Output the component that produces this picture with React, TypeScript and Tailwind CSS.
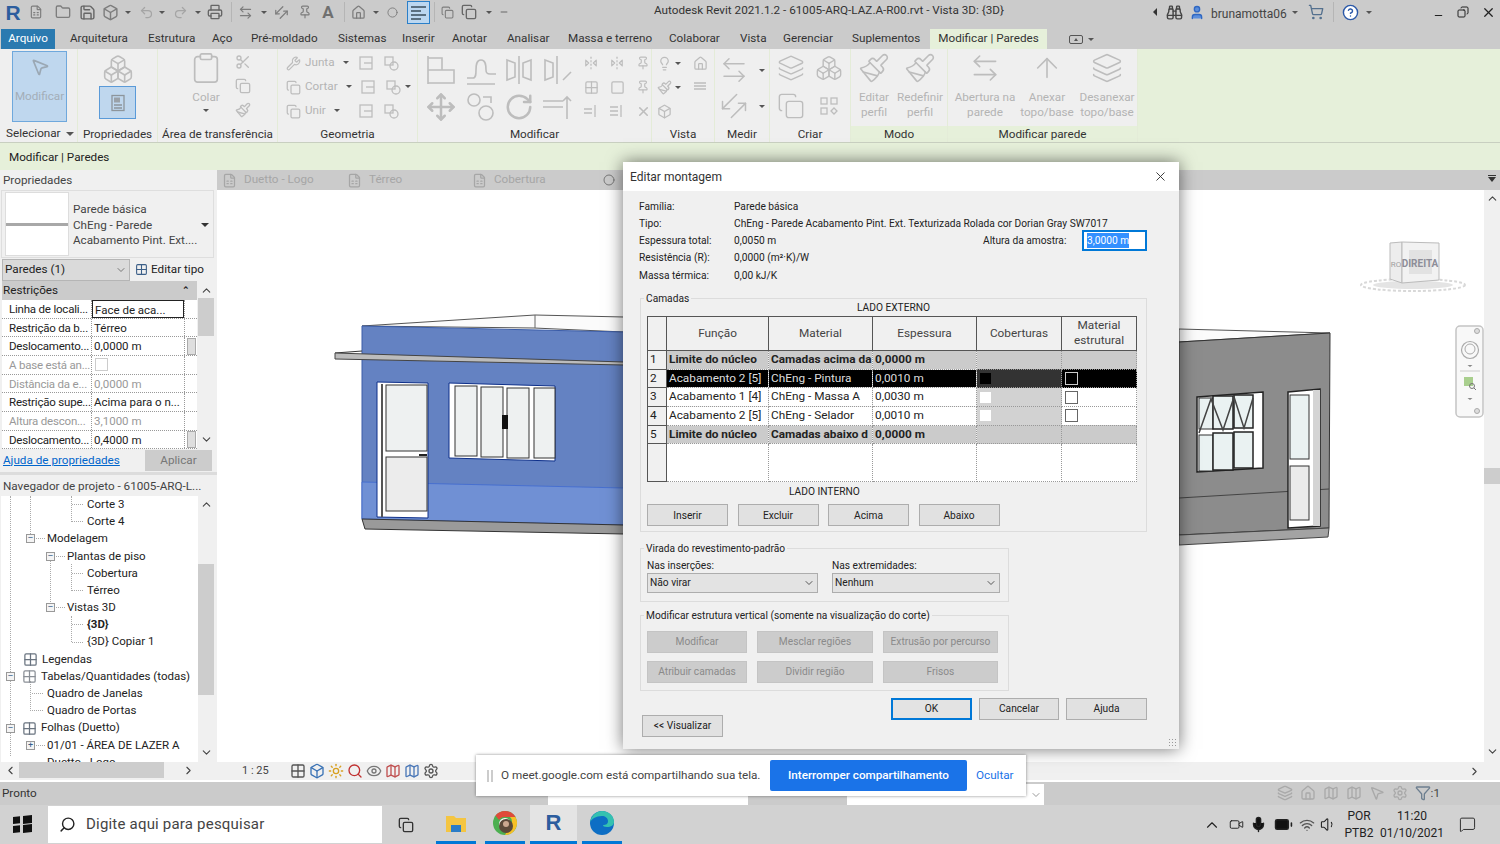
import {
  ArrowLeftRight, ArrowUp, Binoculars, ChevronDown, ChevronLeft, ChevronRight, ChevronUp, Circle, Copy, Eye,
  FileSpreadsheet, FlipHorizontal2, Folder, Grid2x2, HelpCircle, Home, Layers, Lightbulb, Mic, Minus, MousePointer2, Move,
  Paintbrush, Pin, Printer, Redo2, RotateCw, Save, Scissors, Search, ShoppingCart, Square, Sun, Undo2, User, Video,
  Volume1, Wifi, X, Box, Boxes, Clipboard, Wrench, Funnel, Settings, MessageSquare, Map, BatteryFull,
} from "lucide-react";
import type { ReactNode } from "react";

const GRAY = "#bdbdbd";

function Arrow({ className = "" }: { className?: string }) {
  return <span className={`inline-block w-0 h-0 border-x-[3px] border-x-transparent border-t-[3px] border-t-[#555] ${className}`} />;
}

function Cell({ w, children }: { w: string; children?: ReactNode }) {
  return <div className={`${w} h-[24px] flex items-center justify-center shrink-0`}>{children}</div>;
}

function TitleBar() {
  const c = "#7d7d7d";
  return (
    <div className="h-[29px] flex items-start shrink-0 pl-[2px]">
      <Cell w="w-[22px]"><span className="text-[21px] font-bold text-[#2c5d9e] leading-none font-['Liberation_Sans',sans-serif]">R</span></Cell>
      <Cell w="w-[24px]"><FileSpreadsheet size={14} color={c} /></Cell>
      <Cell w="w-[30px]"><Folder size={16} color={c} /></Cell>
      <Cell w="w-[18px]"><Save size={17} color="#666" /></Cell>
      <Cell w="w-[28px]"><Box size={17} color={c} /></Cell>
      <Cell w="w-[8px]"><Arrow /></Cell>
      <Cell w="w-[28px]"><Undo2 size={15} color="#a5a5a5" /></Cell>
      <Cell w="w-[4px]"><Arrow /></Cell>
      <Cell w="w-[32px]"><Redo2 size={15} color="#a5a5a5" /></Cell>
      <Cell w="w-[4px]"><Arrow /></Cell>
      <Cell w="w-[30px]"><Printer size={16} color="#666" /></Cell>
      <Cell w="w-[2px]"><div className="w-px h-[20px] bg-[#b5b5b5]" /></Cell>
      <Cell w="w-[26px]"><ArrowLeftRight size={15} color={c} /></Cell>
      <Cell w="w-[12px]"><Arrow /></Cell>
      <Cell w="w-[22px]"><ArrowLeftRight size={15} color={c} className="-rotate-45" /></Cell>
      <Cell w="w-[26px]"><Pin size={14} color={c} /></Cell>
      <Cell w="w-[20px]"><span className="text-[17px] font-bold text-[#707070] leading-none">A</span></Cell>
      <Cell w="w-[12px]"><div className="w-px h-[20px] bg-[#b5b5b5]" /></Cell>
      <Cell w="w-[16px]"><Home size={15} color={c} /></Cell>
      <Cell w="w-[20px]"><Arrow /></Cell>
      <Cell w="w-[12px]"><Circle size={11} color={c} /></Cell>
      <Cell w="w-[9px]" />
      <div className="w-[23px] h-[23px] mt-px bg-[#bcd7f0] border border-[#2a7fc9] flex flex-col justify-center gap-[2px] px-[3px] shrink-0">
        <div className="h-[2px] bg-[#5a6f80]" /><div className="h-[2px] w-[10px] bg-[#5a6f80]" /><div className="h-[2px] bg-[#5a6f80]" /><div className="h-[2px] w-[10px] bg-[#5a6f80]" />
      </div>
      <Cell w="w-[8px]"><div className="w-px h-[20px] bg-[#b5b5b5]" /></Cell>
      <Cell w="w-[18px]"><Copy size={13} color={c} /></Cell>
      <Cell w="w-[26px]"><Copy size={16} color="#666" /></Cell>
      <Cell w="w-[14px]"><Arrow /></Cell>
      <Cell w="w-[16px]"><Minus size={10} color="#555" /></Cell>
      <div className="w-[142px] shrink-0" />
      <div className="text-[11.7px] text-[#333] mt-[2px] whitespace-nowrap w-[352px] shrink-0">Autodesk Revit 2021.1.2 - 61005-ARQ-LAZ.A-R00.rvt - Vista 3D: {"{3D}"}</div>
      <div className="w-[145px] shrink-0" />
      <Cell w="w-[8px]"><span className="w-0 h-0 border-y-[4px] border-y-transparent border-r-[4px] border-r-[#333]" /></Cell>
      <Cell w="w-[30px]"><Binoculars size={17} color="#444" /></Cell>
      <Cell w="w-[16px]"><User size={17} color="#2f67c2" fill="#5b8edc" /></Cell>
      <div className="ml-[6px] w-[78px] text-[12px] text-[#444] mt-[5px] shrink-0">brunamotta06</div>
      <Cell w="w-[12px]"><Arrow /></Cell>
      <Cell w="w-[30px]"><ShoppingCart size={16} color="#54708e" /></Cell>
      <Cell w="w-[4px]"><div className="w-px h-[20px] bg-[#b5b5b5]" /></Cell>
      <Cell w="w-[30px]"><HelpCircle size={17} color="#2a58a8" fill="#fff" /></Cell>
      <Cell w="w-[8px]"><Arrow /></Cell>
      <div className="w-[53px] shrink-0" />
      <Cell w="w-[24px]"><Minus size={11} color="#222" strokeWidth={2.5} className="mt-[6px]" /></Cell>
      <Cell w="w-[26px]"><Copy size={12} color="#222" className="scale-x-[-1]" /></Cell>
      <Cell w="w-[24px]"><X size={15} color="#222" /></Cell>
    </div>
  );
}

const tabs: [string, string][] = [
  ["Arquitetura", "w-[78px]"], ["Estrutura", "w-[64px]"], ["Aço", "w-[39px]"], ["Pré-moldado", "w-[87px]"], ["Sistemas", "w-[64px]"],
  ["Inserir", "w-[50px]"], ["Anotar", "w-[55px]"], ["Analisar", "w-[61px]"], ["Massa e terreno", "w-[101px]"], ["Colaborar", "w-[71px]"],
  ["Vista", "w-[43px]"], ["Gerenciar", "w-[69px]"], ["Suplementos", "w-[78px]"],
];

function TabRow() {
  return (
    <div className="h-[20px] flex items-center shrink-0 pl-px text-[11.7px] text-[#333]">
      <div className="w-[54px] h-full bg-[#2a7ab0] text-white flex items-center justify-center">Arquivo</div>
      <div className="w-[15px]" />
      {tabs.map(([t, w]) => <div key={t} className={`${w} whitespace-nowrap`}>{t}</div>)}
      <div className="w-[117px] h-full bg-[#e6f0da] flex items-center justify-center">Modificar | Paredes</div>
      <div className="ml-[22px] w-[14px] h-[9px] rounded-[2px] border border-[#555] flex items-center justify-center"><span className="w-0 h-0 border-x-[2px] border-x-transparent border-b-[3px] border-b-[#555]" /></div>
      <Arrow className="ml-[5px]" />
    </div>
  );
}

function RC({ w = "w-[25px]", children }: { w?: string; children?: ReactNode }) {
  return <div className={`${w} h-[24px] flex items-center justify-center shrink-0`}>{children}</div>;
}

function RLabel({ children, className = "" }: { children: ReactNode; className?: string }) {
  return <span className={`text-[11.7px] text-[#b4b4b4] ${className}`}>{children}</span>;
}

function RGroup({ w, title, green, children }: { w: string; title: string; green?: boolean; children: ReactNode }) {
  return (
    <div className={`${w} h-full flex flex-col border-r border-[#e4ecd8] shrink-0 ${green ? "bg-[#e6f0da]" : "bg-[#efefef]"}`}>
      <div className="h-[77px] bg-[#efefef] relative">{children}</div>
      <div className="h-[16px] text-[11.7px] leading-[16px] text-center text-[#333] whitespace-nowrap">{title}</div>
    </div>
  );
}

function BigIcon({ children }: { children: ReactNode }) {
  return <svg width="32" height="32" viewBox="0 0 32 32" fill="none" stroke={GRAY} strokeWidth="1.6">{children}</svg>;
}

function Small({ children }: { children: ReactNode }) {
  return <svg width="18" height="18" viewBox="0 0 18 18" fill="none" stroke={GRAY} strokeWidth="1.3">{children}</svg>;
}

function Ribbon() {
  return (
    <div className="h-[94px] shrink-0 bg-[#e6f0da] border-b border-[#c8cfc0] flex">
      <div className="h-[93px] flex">
        <RGroup w="w-[78px]" title="">
          <div className="mx-[12px] mt-[2px] w-[55px] h-[71px] bg-[#bfd7ee] border border-[#6fa8dc] flex flex-col items-center pt-[5px]">
            <MousePointer2 size={20} color="#9ba8b4" />
            <span className="text-[11.7px] text-[#a3aeb8] mt-[11px]">Modificar</span>
          </div>
          <div className="absolute left-[6px] top-[77px] h-[16px] flex items-center gap-[5px] text-[11.7px] text-[#333]">Selecionar <Arrow className="border-x-[4px] border-t-[4px]" /></div>
        </RGroup>
        <RGroup w="w-[80px]" title="Propriedades">
          <div className="flex flex-col items-center pt-[4px]">
            <Boxes size={32} color={GRAY} strokeWidth={1.2} />
            <div className="mt-[1px] w-[37px] h-[33px] bg-[#bfd7ee] border border-[#5a9ad8] flex items-center justify-center">
              <Small><rect x="3" y="1.5" width="12" height="15" stroke="#8d959c" /><rect x="5" y="3.5" width="6" height="5" fill="#9aa1a8" stroke="none" /><path d="M5 11h8M5 14h8" stroke="#8d959c" /></Small>
            </div>
          </div>
        </RGroup>
        <RGroup w="w-[120px]" title="Área de transferência">
          <div className="flex pt-[1px]">
            <div className="w-[72px] pl-[24px] flex flex-col items-center">
              <Clipboard size={34} color={GRAY} strokeWidth={1.2} className="mt-[1px]" />
              <RLabel className="mt-[4px]">Colar</RLabel>
              <Arrow className="mt-[2px]" />
            </div>
            <div className="flex flex-col w-[24px]">
              <RC><Scissors size={16} color={GRAY} /></RC>
              <RC><Copy size={16} color={GRAY} /></RC>
              <RC><Paintbrush size={16} color={GRAY} /></RC>
            </div>
          </div>
        </RGroup>
        <RGroup w="w-[140px]" title="Geometria">
          <div className="flex flex-col pl-[3px] pt-[2px]">
            {[["Junta", "w-[46px]", Wrench, "w-[2px]"], ["Cortar", "w-[50px]", Copy, "w-[0px]"], ["Unir", "w-[46px]", Copy, "w-[2px]"]].map(([t, w, Ic, sp]: any) => (
              <div key={t} className="flex items-center">
                <RC w="w-[24px]"><Ic size={15} color={GRAY} /></RC>
                <div className={`${w} flex items-center gap-[8px]`}><RLabel>{t}</RLabel><Arrow /></div>
                <div className={sp} />
                <RC><Small><rect x="3" y="3" width="12" height="12" /><path d="M7 9h8" /></Small></RC>
                <RC><Small><rect x="3" y="3" width="8" height="8" /><circle cx="12" cy="12" r="4" /></Small></RC>
              </div>
            ))}
            <Arrow className="absolute left-[127px] top-[36px]" />
          </div>
        </RGroup>
        <RGroup w="w-[234px]" title="Modificar">
          <div className="flex pl-[3px]">
            <div className="grid grid-cols-[40px_39px_38px_38px] h-[77px] items-center justify-items-center w-[155px] pt-[2px]">
              <BigIcon><path d="M3 2v28M3 4h14v12H3M3 16h26v13H3" /></BigIcon>
              <BigIcon><path d="M2 24h6c3 0 3-4 3-8s0-10 5-10 5 6 5 10 2 4 4 4h6M2 30h28" /></BigIcon>
              <BigIcon><path d="M16 2v28M4 6l8 3v14l-8 3zM28 6l-8 3v14l8 3z" /></BigIcon>
              <BigIcon><path d="M4 6l8 3v14l-8 3zM16 2v28" /><path d="M22 26l8-8" /></BigIcon>
              <Move size={30} color={GRAY} />
              <BigIcon><circle cx="9" cy="9" r="6" /><circle cx="21" cy="22" r="7" /><path d="M18 6h8v6" /></BigIcon>
              <RotateCw size={30} color={GRAY} />
              <BigIcon><path d="M2 10h20M2 16h20M26 28V6M22 10l4-4 4 4" /></BigIcon>
            </div>
            <div className="grid grid-cols-[26px_26px_26px] grid-rows-[24px_24px_24px] items-center justify-items-center pl-[2px] pt-[2px]">
              <FlipHorizontal2 size={14} color={GRAY} /><FlipHorizontal2 size={14} color={GRAY} /><Pin size={14} color={GRAY} />
              <Grid2x2 size={15} color={GRAY} /><Square size={15} color={GRAY} /><Pin size={14} color={GRAY} />
              <Small><path d="M2 7h8M2 11h8M13 3v12" /></Small><Small><path d="M2 5h8M2 9h8M2 13h8M13 3v12" /></Small><X size={15} color={GRAY} strokeWidth={2.5} />
            </div>
          </div>
        </RGroup>
        <RGroup w="w-[63px]" title="Vista">
          <div className="flex flex-col pl-[2px] pt-[2px]">
            <div className="flex items-center"><RC w="w-[21px]"><Lightbulb size={15} color={GRAY} /></RC><Arrow className="mr-[7px]" /><RC w="w-[24px]"><Home size={15} color={GRAY} /></RC></div>
            <div className="flex items-center"><RC w="w-[21px]"><Paintbrush size={15} color={GRAY} /></RC><Arrow className="mr-[7px]" /><RC w="w-[24px]"><Small><path d="M3 5h12M3 8h12M3 11h12" /></Small></RC></div>
            <RC w="w-[21px]"><Box size={15} color={GRAY} /></RC>
          </div>
        </RGroup>
        <RGroup w="w-[55px]" title="Medir">
          <div className="flex flex-col pt-[3px] pl-[4px]">
            <div className="h-[36px] flex items-center"><ArrowLeftRight size={30} color={GRAY} strokeWidth={1.2} /><Arrow className="ml-[10px]" /></div>
            <div className="h-[36px] flex items-center"><ArrowLeftRight size={30} color={GRAY} strokeWidth={1.2} className="-rotate-45" /><Arrow className="ml-[10px]" /></div>
          </div>
        </RGroup>
        <RGroup w="w-[81px]" title="Criar">
          <div className="grid grid-cols-[38px_38px] grid-rows-[38px_38px] items-center justify-items-center pl-[2px]">
            <Layers size={28} color={GRAY} strokeWidth={1.2} />
            <Boxes size={28} color={GRAY} strokeWidth={1.2} />
            <Copy size={28} color={GRAY} strokeWidth={1.2} />
            <Small><rect x="1" y="1" width="6" height="6" /><rect x="11" y="1" width="6" height="6" /><rect x="1" y="11" width="6" height="6" /><path d="M11 14l3-3 3 3-3 3z" /></Small>
          </div>
        </RGroup>
        <RGroup w="w-[97px]" title="Modo" green>
          <div className="flex">
            {["Editar|perfil", "Redefinir|perfil"].map((t) => (
              <div key={t} className="w-[46px] flex flex-col items-center pt-[3px]">
                <Paintbrush size={32} color={GRAY} strokeWidth={1.2} />
                <RLabel className="leading-[15px] text-center mt-[6px] whitespace-nowrap">{t.split("|")[0]}<br />{t.split("|")[1]}</RLabel>
              </div>
            ))}
          </div>
        </RGroup>
        <RGroup w="w-[190px]" title="Modificar parede" green>
          <div className="flex pl-[6px]">
            {[["Abertura na|parede", "w-[62px]", ArrowLeftRight], ["Anexar|topo/base", "w-[62px]", ArrowUp], ["Desanexar|topo/base", "w-[58px]", Layers]].map(([t, w, Ic]: any) => (
              <div key={t} className={`${w} flex flex-col items-center pt-[3px]`}>
                <Ic size={32} color={GRAY} strokeWidth={1.2} />
                <RLabel className="leading-[15px] text-center mt-[6px] whitespace-nowrap">{t.split("|")[0]}<br />{t.split("|")[1]}</RLabel>
              </div>
            ))}
          </div>
        </RGroup>
      </div>
    </div>
  );
}

const props: [string, string, boolean][] = [
  ["Linha de locali...", "Face de aca...", true],
  ["Restrição da b...", "Térreo", true],
  ["Deslocamento...", "0,0000 m", true],
  ["A base está an...", "", false],
  ["Distância da e...", "0,0000 m", false],
  ["Restrição supe...", "Acima para o n...", true],
  ["Altura descon...", "3,1000 m", false],
  ["Deslocamento...", "0,4000 m", true],
];

function Properties() {
  return (
    <div className="h-[305px] flex flex-col border-b-[3px] border-[#dcdcdc]">
      <div className="h-[20px] leading-[20px] pl-[3px] text-[11.7px] text-[#444]">Propriedades</div>
      <div className="mx-[1px] mr-[3px] h-[68px] border border-[#dedede] flex items-center relative">
        <div className="w-[64px] h-[64px] ml-[3px] bg-white border border-[#ddd] flex items-center"><div className="w-full h-[3px] bg-[#a8a8a8]" /></div>
        <div className="ml-[4px] mt-[3px] leading-[15.6px] text-[11.7px] text-[#444] whitespace-nowrap">Parede básica<br />ChEng - Parede<br />Acabamento Pint. Ext....</div>
        <span className="absolute left-[199px] top-[32px] w-0 h-0 border-x-[4px] border-x-transparent border-t-[4px] border-t-[#333]" />
      </div>
      <div className="h-[23px] flex items-center pl-[2px]">
        <div className="w-[128px] h-[22px] bg-[#dadada] border border-[#b5b5b5] flex items-center justify-between px-[2px] text-[11.7px]">Paredes (1)<ChevronDown size={12} color="#777" /></div>
        <Grid2x2 size={13} color="#3c5f88" className="ml-[5px]" />
        <span className="ml-[3px] text-[11.7px] whitespace-nowrap">Editar tipo</span>
      </div>
      <div className="flex h-[168px]">
        <div className="w-[195px] ml-[2px]">
          <div className="h-[19px] bg-[#cbcbcb] text-[11.7px] flex items-center justify-between pl-px pr-[7px]">Restrições<span className="text-[9px] font-bold leading-none">⌃</span></div>
          {props.map(([l, v, on], i) => (
            <div key={i} className="h-[18.67px] flex bg-white border-b border-dotted border-[#999] text-[11.5px]">
              <div className={`w-[90px] pl-[7px] border-r border-dotted border-[#999] whitespace-nowrap tracking-[-0.2px] leading-[18px] ${on ? "text-[#222]" : "text-[#999]"}`}>{l}</div>
              <div className={`w-[92px] pl-[2px] whitespace-nowrap leading-[18px] ${i === 0 ? "border border-[#222] text-[#222]" : on ? "text-[#222]" : "text-[#999]"}`}>
                {i === 3 ? <div className="w-[13px] h-[13px] border border-[#ccc] mt-[2px] ml-px" /> : v}
              </div>
              <div className="flex-1 border-l border-dotted border-[#999] flex items-center justify-center">
                {(i === 2 || i === 7) && <div className="w-[9px] h-[17px] bg-[#dedede] border border-[#aaa]" />}
              </div>
            </div>
          ))}
        </div>
        <div className="w-[16px] ml-[1px] relative flex flex-col items-center justify-between text-[#444] bg-[#f0f0f0]">
          <ChevronUp size={13} strokeWidth={2} className="mt-[3px]" />
          <div className="absolute top-[17px] left-0 w-[16px] h-[38px] bg-[#cdcdcd]" />
          <ChevronDown size={13} strokeWidth={2} className="mb-[3px]" />
        </div>
      </div>
      <div className="flex items-center justify-between pl-[3px] pr-[5px] pt-[1px]">
        <span className="text-[11.7px] text-[#0066cc] underline">Ajuda de propriedades</span>
        <div className="w-[67px] h-[21px] bg-[#cccccc] text-[11.7px] text-[#777] flex items-center justify-center">Aplicar</div>
      </div>
    </div>
  );
}

const tree: { t: string; ml: string; box?: string; ic?: ReactNode; bold?: boolean }[] = [
  { t: "Corte 3", ml: "ml-[71px]" },
  { t: "Corte 4", ml: "ml-[71px]" },
  { t: "Modelagem", ml: "ml-[25px]", box: "-" },
  { t: "Plantas de piso", ml: "ml-[45px]", box: "-" },
  { t: "Cobertura", ml: "ml-[71px]" },
  { t: "Térreo", ml: "ml-[71px]" },
  { t: "Vistas 3D", ml: "ml-[45px]", box: "-" },
  { t: "{3D}", ml: "ml-[71px]", bold: true },
  { t: "{3D} Copiar 1", ml: "ml-[71px]" },
  { t: "Legendas", ml: "ml-[22px]", ic: <Grid2x2 size={15} color="#6a7480" /> },
  { t: "Tabelas/Quantidades (todas)", ml: "ml-[5px]", box: "-", ic: <Grid2x2 size={15} color="#8a8f96" /> },
  { t: "Quadro de Janelas", ml: "ml-[31px]" },
  { t: "Quadro de Portas", ml: "ml-[31px]" },
  { t: "Folhas (Duetto)", ml: "ml-[5px]", box: "-", ic: <Grid2x2 size={15} color="#6a7480" /> },
  { t: "01/01 - ÁREA DE LAZER A", ml: "ml-[25px]", box: "+" },
  { t: "Duetto - Logo", ml: "ml-[31px]" },
];

function Browser() {
  return (
    <div className="flex-1 flex flex-col">
      <div className="h-[21px] leading-[22px] pl-[3px] text-[11.7px] text-[#444] whitespace-nowrap">Navegador de projeto - 61005-ARQ-L...</div>
      <div className="flex h-[266px]">
        <div className="w-[197px] ml-[1px] bg-white overflow-hidden text-[11.5px] text-[#222] relative">
          <div className="absolute left-[70px] top-0 h-[26px] border-l border-dotted border-[#aaa]" />
          <div className="absolute left-[29px] top-0 h-[38px] border-l border-dotted border-[#aaa]" />
          <div className="absolute left-[49px] top-[60px] h-[52px] border-l border-dotted border-[#aaa]" />
          <div className="absolute left-[70px] top-[68px] h-[27px] border-l border-dotted border-[#aaa]" />
          <div className="absolute left-[70px] top-[120px] h-[26px] border-l border-dotted border-[#aaa]" />
          <div className="absolute left-[9px] top-0 h-[260px] border-l border-dotted border-[#aaa]" />
          <div className="absolute left-[29px] top-[185px] h-[30px] border-l border-dotted border-[#aaa]" />
          {tree.map((r) => (
            <div key={r.t} className={`h-[17.2px] flex items-center ${r.ml} whitespace-nowrap relative`}>
              {r.box && <span className="w-[9px] h-[9px] mr-[1px] border border-[#999] bg-[#f4f4f4] flex items-center justify-center text-[9px] leading-none text-[#3a5f8a] shrink-0">{r.box === "-" ? "–" : "+"}</span>}
              {r.box && !r.ic && <span className="w-[9px] border-t border-dotted border-[#aaa] mr-[2px]" />}
              {!r.box && !r.ic && <span className="w-[11px] border-t border-dotted border-[#aaa] mr-[4px]" />}
              {r.ic && <span className={`${r.box ? "ml-[6px]" : ""} mr-[4px] flex`}>{r.ic}</span>}
              <span className={r.bold ? "font-bold" : ""}>{r.t}</span>
            </div>
          ))}
        </div>
        <div className="w-[16px] relative flex flex-col items-center justify-between text-[#444]">
          <ChevronUp size={13} className="mt-[2px]" />
          <div className="absolute top-[68px] left-0 w-[16px] h-[131px] bg-[#cdcdcd]" />
          <ChevronDown size={13} className="mb-[3px]" />
        </div>
      </div>
      <div className="h-[16px] flex items-center mx-[1px] text-[#444]">
        <ChevronLeft size={13} className="ml-[3px]" />
        <div className="ml-[2px] w-[145px] h-[16px] bg-[#cdcdcd]" />
        <ChevronRight size={13} className="ml-[18px]" />
      </div>
    </div>
  );
}

function Wall3D() {
  return (
    <svg width="1267" height="572" viewBox="216 190 1267 572" className="block">
      {/* left wing */}
      <polygon points="361,326 534,315 623,317 623,332 533,328" fill="#fbfbfb" stroke="#555" />
      <line x1="534" y1="315" x2="534" y2="328" stroke="#666" />
      <polygon points="361,326 623,332 623,525 361,519" fill="#6482c2" stroke="#3a5ca8" />
      <polygon points="361,482 623,488 623,525 361,519" fill="#7090d4" stroke="#3f6ad0" strokeWidth="0.8" />
      <polyline points="334,353 361,351" stroke="#333" fill="none" />
      <polygon points="334,353 623,362 623,365 334,359" fill="#bcbcbc" stroke="#444" />
      <polygon points="361,519 623,525 623,534 364,529" fill="#9a9a9a" stroke="#333" />
      <polygon points="376,382 427,383 427,518 376,517" fill="#fff" stroke="#0d2f8a" />
      <rect x="380" y="384" width="2" height="133" fill="#555" />
      <rect x="385" y="385" width="41" height="66" fill="#eef1f1" stroke="#333" />
      <rect x="385" y="457" width="41" height="54" fill="#ececec" stroke="#333" />
      <rect x="418" y="454" width="8" height="2" fill="#222" />
      <polygon points="448,383 554,386 554,461 448,458" fill="#fff" stroke="#0d2f8a" />
      <rect x="454" y="386" width="22" height="70" fill="#eef1f1" stroke="#333" />
      <rect x="480" y="387" width="22" height="70" fill="#eef1f1" stroke="#333" />
      <rect x="506" y="388" width="22" height="70" fill="#eef1f1" stroke="#333" />
      <rect x="533" y="388" width="21" height="70" fill="#eef1f1" stroke="#333" />
      <rect x="501" y="415" width="6" height="14" fill="#111" />
      {/* right wing */}
      <polygon points="1178,329 1329,333 1178,342" fill="#fbfbfb" stroke="#555" />
      <polygon points="1178,342 1329,333 1328,528 1178,535" fill="#8c8c8c" stroke="#333" />
      <polyline points="1178,498 1328,489" stroke="#444" fill="none" />
      <polygon points="1178,535 1328,528 1327,537 1178,545" fill="#a3a3a3" stroke="#444" />
      <polygon points="1196,397 1262,392 1262,468 1196,472" fill="#fff" stroke="#222" strokeWidth="1.5" />
      <rect x="1198" y="398" width="14" height="31" fill="#eaf2f2" stroke="#333" />
      <rect x="1212" y="396" width="20" height="33" fill="#eaf2f2" stroke="#222" strokeWidth="1.5" />
      <rect x="1233" y="395" width="19" height="33" fill="#eaf2f2" stroke="#222" strokeWidth="1.5" />
      <rect x="1198" y="435" width="14" height="36" fill="#eaf2f2" stroke="#333" />
      <rect x="1212" y="433" width="20" height="37" fill="#eaf2f2" stroke="#222" strokeWidth="1.5" />
      <rect x="1233" y="432" width="19" height="36" fill="#eaf2f2" stroke="#222" strokeWidth="1.5" />
      <polyline points="1198,433 1210,399 1222,430 1233,397 1243,428 1252,398" fill="none" stroke="#444" strokeWidth="1.5" />
      <polygon points="1287,392 1319,389 1319,526 1287,528" fill="#fff" stroke="#222" strokeWidth="1.5" />
      <rect x="1289" y="395" width="19" height="64" fill="#eaf2f2" stroke="#333" />
      <rect x="1289" y="466" width="19" height="54" fill="#ebebeb" stroke="#333" />
      <rect x="1312" y="390" width="7" height="136" fill="#d4d4d4" />
      {/* view cube */}
      <ellipse cx="1412" cy="285" rx="52" ry="6" fill="none" stroke="#d8d8d8" strokeWidth="2" strokeDasharray="3 2" />
      <ellipse cx="1412" cy="285" rx="40" ry="4" fill="#e4e4e4" />
      <polygon points="1389,243 1401,242 1401,283 1389,279" fill="#ededed" stroke="#bbb" />
      <polygon points="1401,242 1438,243 1438,280 1401,283" fill="#f2f2f2" stroke="#bbb" />
      <rect x="1408" y="250" width="23" height="24" fill="#e2e2e2" />
      <text x="1419" y="267" textAnchor="middle" fontSize="10" fontWeight="700" fill="#8d8d98" fontFamily="Roboto, sans-serif">DIREITA</text>
      <text x="1395" y="267" textAnchor="middle" fontSize="8" fill="#a0a0a0" fontFamily="Roboto, sans-serif">RO</text>
      {/* nav bar */}
      <rect x="1455" y="326" width="27" height="91" rx="4" fill="#f8f8f8" stroke="#c4c4c4" strokeWidth="1.5" />
      <circle cx="1476" cy="331" r="2.5" fill="#ddd" stroke="#aaa" />
      <circle cx="1476" cy="411" r="2.5" fill="#ddd" stroke="#aaa" />
      <circle cx="1469" cy="350" r="8.5" fill="none" stroke="#aaa" strokeWidth="1.2" />
      <circle cx="1469" cy="349" r="5" fill="none" stroke="#aaa" />
      <path d="M1466.5 365l2.5 2 2.5-2z" fill="#888" />
      <line x1="1459" y1="371" x2="1479" y2="371" stroke="#ccc" />
      <rect x="1463" y="377" width="9" height="9" fill="#a9cf8e" />
      <circle cx="1471" cy="386" r="2.5" fill="none" stroke="#777" />
      <line x1="1473" y1="388" x2="1475" y2="390" stroke="#777" />
      <path d="M1466.5 398l2.5 2 2.5-2z" fill="#888" />
    </svg>
  );
}

function Viewport() {
  const tabGray = "text-[11.7px] text-[#a6a6a6]";
  return (
    <div className="flex-1 flex flex-col min-w-0">
      <div className="h-[20px] bg-[#cbcbcb] flex items-center pl-[5px] relative shrink-0">
        <FileSpreadsheet size={15} color="#a6a6a6" /><span className={`${tabGray} ml-[7px] w-[103px]`}>Duetto - Logo</span>
        <FileSpreadsheet size={15} color="#a6a6a6" /><span className={`${tabGray} ml-[7px] w-[103px]`}>Térreo</span>
        <FileSpreadsheet size={15} color="#a6a6a6" /><span className={`${tabGray} ml-[7px] w-[109px]`}>Cobertura</span>
        <Circle size={12} color="#777" />
        <div className="absolute right-[4px] top-[5px] flex flex-col gap-px items-center"><div className="w-[8px] h-px bg-[#333]" /><span className="w-0 h-0 border-x-[4px] border-x-transparent border-t-[5px] border-t-[#333]" /></div>
      </div>
      <div className="h-[572px] flex bg-white shrink-0">
        <Wall3D />
        <div className="w-[16px] bg-[#f0f0f0] relative flex flex-col items-center justify-between text-[#444]">
          <ChevronUp size={13} strokeWidth={2} className="mt-[2px]" />
          <div className="absolute top-[278px] left-0 w-[16px] h-[16px] bg-[#cdcdcd]" />
          <ChevronDown size={13} strokeWidth={2} className="mb-[4px]" />
        </div>
      </div>
      <div className="h-[18px] bg-[#f0f0f0] flex items-center text-[#444] shrink-0">
        <span className="ml-[25px] text-[11px] w-[48px]">1 : 25</span>
        <div className="flex items-center gap-[3px]">
          <Grid2x2 size={16} color="#555" />
          <Box size={16} color="#3b73b5" />
          <Sun size={16} color="#d8a020" />
          <Search size={16} color="#c03030" />
          <Eye size={16} color="#777" />
          <Map size={16} color="#c05050" />
          <Map size={16} color="#4b78b8" />
          <Settings size={16} color="#555" />
        </div>
        <div className="flex-1" />
        <ChevronRight size={13} className="mr-[19px]" />
      </div>
    </div>
  );
}

function Btn({ w, children, off, primary }: { w: string; children: ReactNode; off?: boolean; primary?: boolean }) {
  return (
    <div className={`${w} flex items-center justify-center shrink-0 text-[10.2px] ${off ? "bg-[#cccccc] text-[#8a8a8a] border border-[#c4c4c4]" : primary ? "bg-[#e3e3e3] border-2 border-[#0078d7] text-[#222]" : "bg-[#e1e1e1] border border-[#adadad] text-[#222]"}`}>{children}</div>
  );
}

type Row = { n: string; f: string; m: string; e: string; kind: "core" | "sel" | "plain" };
const rows: Row[] = [
  { n: "1", f: "Limite do núcleo", m: "Camadas acima da", e: "0,0000 m", kind: "core" },
  { n: "2", f: "Acabamento 2 [5]", m: "ChEng - Pintura", e: "0,0010 m", kind: "sel" },
  { n: "3", f: "Acabamento 1 [4]", m: "ChEng - Massa A", e: "0,0030 m", kind: "plain" },
  { n: "4", f: "Acabamento 2 [5]", m: "ChEng - Selador", e: "0,0010 m", kind: "plain" },
  { n: "5", f: "Limite do núcleo", m: "Camadas abaixo d", e: "0,0000 m", kind: "core" },
];

const dot = "border border-dotted border-[#999]";

function LayersTable() {
  return (
    <table className="table-fixed border-collapse w-[489px] text-[11.8px] text-[#222]">
      <colgroup>
        <col className="w-[19px]" /><col className="w-[102px]" /><col className="w-[104px]" /><col className="w-[104px]" /><col className="w-[85px]" /><col className="w-[75px]" />
      </colgroup>
      <thead>
        <tr className="h-[34px] bg-[#f0f0f0] text-[#444]">
          {["", "Função", "Material", "Espessura", "Coberturas"].map((h) => <th key={h} className="font-normal border border-[#555]">{h}</th>)}
          <th className="font-normal border border-[#555] leading-[15px]">Material<br />estrutural</th>
        </tr>
      </thead>
      <tbody>
        {rows.map((r) => {
          const bg = r.kind === "core" ? "bg-[#cbcbcb] font-bold" : r.kind === "sel" ? "bg-black text-[#ddd]" : "bg-white";
          return (
            <tr key={r.n} className="h-[18.67px]">
              <td className="bg-[#f0f0f0] border border-[#555] px-[2px] leading-none">{r.n}</td>
              <td className={`${bg} ${dot} px-[2px] leading-none whitespace-nowrap overflow-hidden`}>{r.f}</td>
              <td className={`${bg} ${dot} px-[2px] leading-none whitespace-nowrap overflow-hidden`}>{r.m}</td>
              <td className={`${bg} ${dot} px-[2px] leading-none whitespace-nowrap overflow-hidden`}>{r.e}</td>
              <td className={`${dot} px-[3px] ${r.kind === "core" ? "bg-[#cbcbcb]" : r.kind === "sel" ? "bg-[#333]" : "bg-[#d2d2d2]"}`}>
                {r.kind !== "core" && <div className={`w-[11px] h-[11px] ${r.kind === "sel" ? "bg-black" : "bg-white"}`} />}
              </td>
              <td className={`${dot} px-[2px] ${r.kind === "core" ? "bg-[#cbcbcb]" : r.kind === "sel" ? "bg-black" : "bg-white"}`}>
                {r.kind !== "core" && <div className={`w-[13px] h-[13px] border ml-px ${r.kind === "sel" ? "bg-black border-[#ccc]" : "bg-white border-[#666]"}`} />}
              </td>
            </tr>
          );
        })}
        <tr className="h-[38px]">
          <td className="bg-[#f0f0f0] border border-[#555]" />
          {[0, 1, 2, 3, 4].map((i) => <td key={i} className={`bg-white ${dot}`} />)}
        </tr>
      </tbody>
    </table>
  );
}

function Select({ w, children }: { w: string; children: ReactNode }) {
  return (
    <div className={`${w} h-[20px] bg-[#e3e3e3] border border-[#adadad] flex items-center justify-between px-[2px] text-[10.2px]`}>
      {children}<ChevronDown size={12} color="#555" />
    </div>
  );
}

function Dialog() {
  const info: [string, string][] = [
    ["Família:", "Parede básica"],
    ["Tipo:", "ChEng - Parede Acabamento Pint. Ext. Texturizada Rolada cor Dorian Gray SW7017"],
    ["Espessura total:", "0,0050 m"],
    ["Resistência (R):", "0,0000 (m²·K)/W"],
    ["Massa térmica:", "0,00 kJ/K"],
  ];
  return (
    <div className="absolute left-[623px] top-[162px] w-[556px] h-[587px] bg-[#f0f0f0] shadow-[0_0_16px_rgba(0,0,0,0.55)] flex flex-col text-[10.2px] text-[#222]">
      <div className="h-[29px] bg-white flex items-center justify-between pl-[7px] pr-[11px] shrink-0">
        <span className="text-[12px] text-[#333]">Editar montagem</span>
        <X size={15} color="#333" strokeWidth={1.5} />
      </div>
      <div className="pt-[6.5px] pl-[16px] shrink-0">
        {info.map(([l, v], i) => (
          <div key={l} className="h-[17.3px] flex items-center whitespace-nowrap">
            <span className="w-[95px]">{l}</span>
            <span className={i === 2 ? "w-[249px]" : ""}>{v}</span>
            {i === 2 && (
              <>
                <span className="w-[99px]">Altura da amostra:</span>
                <div className="w-[65px] h-[21px] bg-white border-2 border-[#0078d7] flex items-center pl-[3px]"><span className="bg-[#3390ff] text-white">3,0000 m</span></div>
              </>
            )}
          </div>
        ))}
      </div>
      <fieldset className="ml-[17px] mt-[8px] w-[507px] h-[240px] border border-[#dcdcdc] shrink-0">
        <legend className="ml-[3px] px-[2px] h-[13px] leading-[13px]">Camadas</legend>
        <div className="text-center h-[14px] leading-[14px] -mt-[4px]">LADO EXTERNO</div>
        <div className="ml-[6px] mt-[1px]"><LayersTable /></div>
        <div className="h-[12px] leading-[12px] mt-[4px] ml-[148px]">LADO INTERNO</div>
        <div className="flex gap-[9.5px] ml-[6px] mt-[6px]">
          {["Inserir", "Excluir", "Acima", "Abaixo"].map((b) => <Btn key={b} w="w-[81px] h-[22px]">{b}</Btn>)}
        </div>
      </fieldset>
      <fieldset className="ml-[17px] mt-[10px] w-[369px] h-[60px] border border-[#dcdcdc] shrink-0">
        <legend className="ml-[3px] px-[2px] h-[13px] leading-[13px]">Virada do revestimento-padrão</legend>
        <div className="flex gap-[14px] ml-[6px]">
          <div className="w-[171px]"><div className="h-[18px] leading-[21px]">Nas inserções:</div><Select w="w-[171px]">Não virar</Select></div>
          <div className="w-[168px]"><div className="h-[18px] leading-[21px]">Nas extremidades:</div><Select w="w-[168px]">Nenhum</Select></div>
        </div>
      </fieldset>
      <fieldset className="ml-[17px] mt-[7px] w-[369px] h-[82px] border border-[#dcdcdc] shrink-0">
        <legend className="ml-[3px] px-[2px] h-[13px] leading-[13px]">Modificar estrutura vertical (somente na visualização do corte)</legend>
        <div className="grid grid-cols-[100px_116px_115px] gap-x-[10px] gap-y-[8px] ml-[6px] mt-[9px]">
          {["Modificar", "Mesclar regiões", "Extrusão por percurso", "Atribuir camadas", "Dividir região", "Frisos"].map((b) => <Btn key={b} off w="h-[22px]">{b}</Btn>)}
        </div>
      </fieldset>
      <div className="flex items-start justify-between ml-[19px] mr-[32px] mt-[7px] relative">
        <div className="mt-[17px]"><Btn w="w-[81px] h-[22px]">{"<< Visualizar"}</Btn></div>
        <div className="flex gap-[7px]">
          <Btn primary w="w-[81px] h-[22px]">OK</Btn>
          <Btn w="w-[80px] h-[22px]">Cancelar</Btn>
          <Btn w="w-[81px] h-[22px]">Ajuda</Btn>
        </div>
      </div>
      <div className="absolute right-[2px] bottom-[2px] w-[9px] h-[9px] bg-[radial-gradient(#999_1px,transparent_1px)] bg-[length:3px_3px]" />
    </div>
  );
}

function ShareBar() {
  return (
    <div className="absolute left-[476px] top-[755px] w-[550px] h-[41px] bg-white shadow-[0_0_3px_rgba(0,0,0,0.45)] flex items-center text-[11.7px] text-[#444]">
      <span className="ml-[11px] flex gap-[2px]"><span className="w-[2px] h-[12px] bg-[#ccc]" /><span className="w-[2px] h-[12px] bg-[#ccc]" /></span>
      <span className="ml-[8px] w-[266px] whitespace-nowrap">O meet.google.com está compartilhando sua tela.</span>
      <div className="ml-[3px] w-[197px] h-[31px] rounded-[2px] bg-[#1a73e8] text-white font-medium flex items-center justify-center whitespace-nowrap">Interromper compartilhamento</div>
      <span className="ml-[9px] text-[#1a73e8]">Ocultar</span>
    </div>
  );
}

function StatusBar() {
  const c = "#a9a9a9";
  return (
    <div className="h-[25px] bg-[#cbcbcb] border-t-2 border-white flex items-center text-[11.7px] text-[#333] shrink-0 relative">
      <span className="ml-[2px]">Pronto</span>
      <div className="absolute left-[548px] top-[14px] w-[200px] h-[9px] bg-white" />
      <div className="absolute left-[847px] top-[2px] w-[197px] h-[21px] bg-white flex items-center justify-end pr-[2px]"><ChevronDown size={12} color="#999" /></div>
      <div className="ml-auto mr-[60px] flex items-center gap-[7px]">
        <Layers size={16} color={c} /><Home size={16} color={c} /><Map size={16} color={c} /><Map size={16} color={c} /><MousePointer2 size={16} color={c} /><Settings size={16} color={c} />
        <Funnel size={16} color="#6d7f90" /><span className="-ml-[7px] text-[#444]">:1</span>
      </div>
    </div>
  );
}

function Taskbar() {
  return (
    <div className="h-[39px] bg-[#d2d2d2] flex items-stretch shrink-0 text-[#222]">
      <div className="w-[48px] flex items-center justify-center pr-[3px]">
        <div className="grid grid-cols-2 gap-[1px] -skew-y-[6deg]"><div className="w-[7px] h-[7px] bg-[#111]" /><div className="w-[9px] h-[8px] bg-[#111]" /><div className="w-[7px] h-[7px] bg-[#111]" /><div className="w-[9px] h-[8px] bg-[#111]" /></div>
      </div>
      <div className="w-[334px] my-px bg-white flex items-center pl-[11px]">
        <Search size={17} color="#222" className="-scale-x-100" />
        <span className="ml-[10px] text-[15px] text-[#444] tracking-[0.2px]">Digite aqui para pesquisar</span>
      </div>
      <div className="w-[48px] flex items-center justify-center"><Copy size={16} color="#333" /></div>
      <div className="w-[6px]" />
      <div className="w-[40px] border-b-[3px] border-[#0078d7] flex items-center justify-center">
        <svg width="22" height="20" viewBox="0 0 22 20"><path d="M1 3h8l2 2h10v14H1z" fill="#f4c542" /><rect x="6" y="12" width="10" height="7" fill="#2a7cc7" /></svg>
      </div>
      <div className="w-[9px]" />
      <div className="w-[40px] border-b-[3px] border-[#0078d7] flex items-center justify-center">
        <svg width="26" height="26" viewBox="0 0 26 26"><circle cx="13" cy="13" r="12" fill="#4caf50" /><path d="M13 1a12 12 0 0 1 10.4 6H13a6 6 0 0 0-6 3L3.5 5.5A12 12 0 0 1 13 1z" fill="#e04a3a" /><path d="M23.4 7A12 12 0 0 1 13 25l5-9a6 6 0 0 0 0-9z" fill="#f6c026" /><circle cx="13" cy="14" r="6" fill="#fff" /><circle cx="14" cy="16" r="7" fill="#5b4a3a" /><circle cx="14" cy="14" r="3" fill="#caa890" /></svg>
      </div>
      <div className="w-[5px]" />
      <div className="w-[47px] bg-[#e4e4e4] border-b-[3px] border-[#0078d7] flex items-center justify-center">
        <span className="text-[22px] font-bold text-[#2c5d9e] leading-none font-['Liberation_Sans',sans-serif]">R</span>
      </div>
      <div className="w-[5px]" />
      <div className="w-[40px] border-b-[3px] border-[#0078d7] flex items-center justify-center">
        <svg width="26" height="26" viewBox="0 0 26 26"><circle cx="13" cy="13" r="12" fill="#0d6ec4" /><path d="M1 13C2 5 8 1 13 1c7 0 12 5 12 11 0 3-3 5-7 5-3 0-4-1-4-2 3 0 5-1 5-4 0-3-3-5-6-5-6 0-11 3-12 7z" fill="#35c1b0" /></svg>
      </div>
      <div className="flex-1" />
      <div className="flex items-center text-[#222]">
        <ChevronUp size={18} strokeWidth={1.5} className="mr-[7.5px]" />
        <Video size={15} strokeWidth={1.5} className="mr-[6px]" />
        <Mic size={17} fill="#111" className="mr-[7px]" />
        <BatteryFull size={19} fill="#111" className="mr-[6.5px]" />
        <Wifi size={16} className="mr-[4.5px] text-[#555]" />
        <Volume1 size={17} strokeWidth={1.5} className="mr-[4.5px]" />
        <div className="w-[36px] text-center text-[12px] leading-[17px]">POR<br />PTB2</div>
        <div className="w-[70px] text-center text-[12px] leading-[17px]">11:20<br />01/10/2021</div>
        <div className="w-[53px] pl-[12px] flex items-center"><MessageSquare size={17} strokeWidth={1.3} /></div>
      </div>
    </div>
  );
}

export default function App() {
  return (
    <div className="w-[1500px] h-[844px] relative overflow-hidden flex flex-col bg-[#cbcbcb] text-[#222] font-['Roboto',sans-serif]">
      <TitleBar />
      <TabRow />
      <Ribbon />
      <div className="h-[27px] bg-[#e6f0da] flex items-center pl-[9px] pt-[2px] text-[11.7px] text-[#222] shrink-0">Modificar | Paredes</div>
      <div className="h-[610px] flex shrink-0">
        <aside className="w-[217px] bg-[#f0f0f0] flex flex-col shrink-0">
          <Properties />
          <Browser />
        </aside>
        <Viewport />
      </div>
      <StatusBar />
      <Taskbar />
      <Dialog />
      <ShareBar />
    </div>
  );
}
